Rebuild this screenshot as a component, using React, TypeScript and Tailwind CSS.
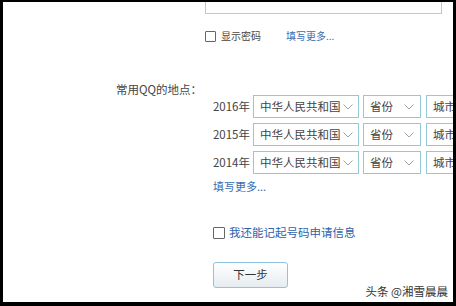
import React from 'react';

const years = ['2016年', '2015年', '2014年'];

function Chevron() {
  return (
    <svg width="10" height="6" viewBox="0 0 10 6" className="shrink-0">
      <polyline points="0.5,0.5 5,5 9.5,0.5" fill="none" stroke="#9aa4ab" strokeWidth="1" />
    </svg>
  );
}

function SelectBox({ label, width, padRight }: { label: string; width: string; padRight: string }) {
  return (
    <div className={`${width} h-[23px] shrink-0 flex items-center justify-between pl-[6px] ${padRight} border border-[#93c8d6] bg-white`}>
      <span className="text-[11.5px] text-[#444] leading-none">{label}</span>
      <Chevron />
    </div>
  );
}

function CheckBox({ size }: { size: string }) {
  return <span className={`${size} shrink-0 border border-[#666] bg-white rounded-[1px]`} />;
}

export default function App() {
  return (
    <div className="w-[456px] h-[306px] bg-black pt-[2px] pl-[3px] pr-[3px] pb-[4px] font-['Noto_Sans_CJK_SC','Noto_Sans',sans-serif]">
      <div className="relative w-full h-full bg-white overflow-hidden flex flex-col">
        {/* textarea bottom edge */}
        <div className="ml-[202px] w-[237px] h-[12px] shrink-0 border-x border-b border-[#a6d2de]" />

        {/* show password */}
        <div className="ml-[202px] mt-[16px] h-[12px] flex items-center">
          <CheckBox size="w-[11px] h-[11px]" />
          <span className="ml-[5px] text-[10px] text-[#444] leading-none">显示密码</span>
          <span className="ml-[25px] text-[10px] text-[#3a6db0] leading-none">填写更多...</span>
        </div>

        {/* location label */}
        <div className="ml-[113px] mt-[40px] h-[14px] leading-[14px] text-[11.5px] text-[#444]">常用QQ的地点：</div>

        {/* year rows */}
        <div className="mt-[-1px] flex flex-col gap-[5px]">
          {years.map((y) => (
            <div key={y} className="flex items-center h-[23px]">
              <div className="ml-[207px] w-[43px] pr-[3px] text-right text-[11.5px] text-[#444] leading-none shrink-0">{y}</div>
              <SelectBox label="中华人民共和国" width="w-[106px]" padRight="pr-[5px]" />
              <div className="w-[4px] shrink-0" />
              <SelectBox label="省份" width="w-[58px]" padRight="pr-[6px]" />
              <div className="w-[5px] shrink-0" />
              <SelectBox label="城市" width="w-[60px]" padRight="pr-[6px]" />
            </div>
          ))}
        </div>

        <div className="ml-[210px] mt-[5px] h-[14px] leading-[14px] text-[11px] text-[#3a6db0]">填写更多...</div>

        {/* remember info */}
        <div className="ml-[210px] mt-[33px] h-[14px] flex items-center">
          <CheckBox size="w-[12px] h-[12px]" />
          <span className="ml-[4px] text-[11.5px] text-[#2d63ad] leading-none">我还能记起号码申请信息</span>
        </div>

        {/* next button */}
        <button className="ml-[210px] mt-[22px] w-[75px] h-[26px] shrink-0 flex items-center justify-center rounded-[3px] border border-[#8fc3e3] bg-gradient-to-b from-[#ffffff] to-[#e6ecf0] text-[11.5px] text-[#333] leading-none">
          下一步
        </button>

        {/* watermark */}
        <div className="absolute right-[5px] bottom-[5px] text-[11.5px] text-[#333] leading-none whitespace-nowrap">
          头条 @湘雪晨晨
        </div>
      </div>
    </div>
  );
}
